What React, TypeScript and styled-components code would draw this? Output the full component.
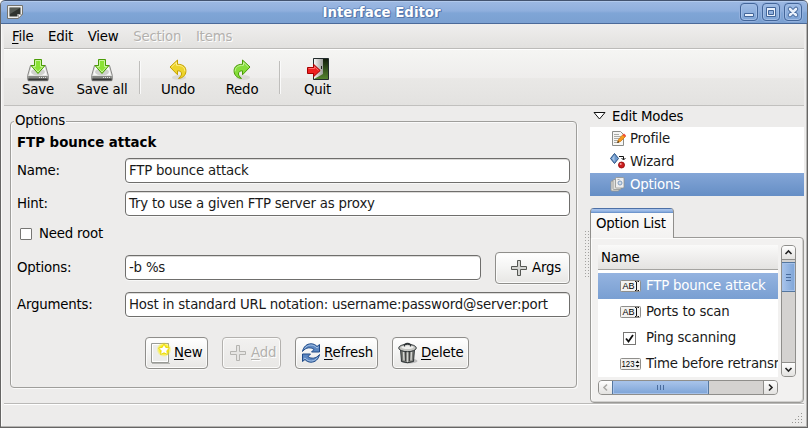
import React from "react";
import styled, { createGlobalStyle, css } from "styled-components";

const Global = createGlobalStyle`
  * { box-sizing: border-box; }
  html, body { margin: 0; padding: 0; background: #fff; }
  body { font: 13.33px/16px "DejaVu Sans", sans-serif; letter-spacing: -0.2px; color: #000; overflow: hidden; }
  svg { display: block; flex: none; letter-spacing: 0; }
`;

/* ---------- window frame ---------- */
const Window = styled.div`
  width: 808px;
  height: 428px;
  display: flex;
  flex-direction: column;
  background: #edeceb;
  border: 1px solid #666564;
  border-top: 0;
  border-radius: 5px 5px 0 0;
  box-shadow: inset -1px -1px 0 #b5b4b2, inset 1px 0 0 #fafaf9;
  overflow: hidden;
`;
const TitleBar = styled.div`
  height: 24px;
  flex: none;
  margin: 0 -1px;
  display: flex;
  align-items: center;
  padding: 0 5px 0 6px;
  border: 1px solid #4b6a99;
  border-top-color: #43536f;
  border-radius: 5px 5px 0 0;
  background: linear-gradient(#9db9e3, #8fafdd 45%, #7fa5d6 55%, #7ba0d1);
  box-shadow: inset 0 1px 0 #b1c9ec;
`;
const Title = styled.div`
  flex: 1;
  padding-top: 2px;
  text-align: center;
  font-weight: bold;
  line-height: 22px;
  letter-spacing: 0;
  color: #fff;
  text-shadow: 1px 1px 0 #5676a8, -1px 0 0 #5c80b6, 0 -1px 0 #6c90c6, 1px 0 0 #5c80b6;
`;
const WindowButtons = styled.div`
  display: flex;
  gap: 4px;
`;
const WindowButton = styled.div`
  width: 18px;
  height: 18px;
  border: 1px solid #426599;
  border-radius: 4px;
  background: linear-gradient(#9fbce5, #7da3d5);
  box-shadow: inset 0 0 0 1px #a2bee6, 0 0 0 1px #93b1de;
`;

const MenuBar = styled.div`
  height: 25px;
  flex: none;
  margin: 0 3px;
  display: flex;
  gap: 14.6px;
  padding: 5px 8px 0;
  background: linear-gradient(#efeeed, #e2e1df);
  border-bottom: 1px solid #bcbbb9;
`;
const MenuItem = styled.span<{ $off?: boolean }>`
  ${(p) => p.$off && css`color: #b3b1ae; text-shadow: 1px 1px 0 #fff;`}
`;
const Key = styled.span`
  text-decoration: underline;
  text-decoration-thickness: 1px;
  text-underline-offset: 2px;
  text-decoration-skip-ink: none;
`;

const ToolBar = styled.div`
  height: 57px;
  flex: none;
  margin: 0 3px;
  display: flex;
  align-items: flex-start;
  border-top: 1px solid #fff;
  border-bottom: 1px solid #c1c0be;
  background: linear-gradient(#f5f5f3, #eeedec 50%, #e9e8e6 52%, #e3e2e0);
`;
const Tool = styled.div<{ $w: number }>`
  width: ${(p) => p.$w}px;
  padding-top: 8px;
  display: flex;
  flex-direction: column;
  align-items: center;
  white-space: nowrap;
  line-height: 15px;
`;
const ToolRule = styled.div<{ $gap: number }>`
  width: 2px;
  height: 33px;
  margin: 11px 0 0 ${(p) => p.$gap}px;
  border-left: 1px solid #bfbebc;
  border-right: 1px solid #fafafa;
`;

/* ---------- body ---------- */
const Body = styled.div`
  height: 297px;
  flex: none;
  margin: 0 3px;
  display: flex;
`;
const Group = styled.fieldset`
  width: 567px;
  height: 267px;
  margin: 15px 0 0 6px;
  padding: 0 6px 0 6px;
  min-width: 0;
  border: 1px solid #9f9e9b;
  border-radius: 4px;
  box-shadow: inset 1px 1px 0 #fafafa, 1px 1px 0 #fafafa;
`;
const Legend = styled.div`
  width: fit-content;
  height: 16px;
  margin: -9px 0 0 -3px;
  padding: 0 1px;
  background: #edeceb;
`;
const Heading = styled.div`
  height: 16px;
  margin-top: 6px;
  font-weight: bold;
  letter-spacing: 0;
`;
const Field = styled.div<{ $top: number; $h?: number }>`
  display: flex;
  align-items: center;
  height: ${(p) => p.$h ?? 25}px;
  margin-top: ${(p) => p.$top}px;
`;
const ButtonField = styled(Field)`
  align-items: flex-start;
  gap: 14px;
`;
const EntryPair = styled.div`
  flex: 1;
  display: flex;
  align-items: center;
  padding-top: 3px;
`;
const Label = styled.label`
  width: 108px;
  flex: none;
`;
const Entry = styled.div`
  flex: 1;
  height: 25px;
  padding: 0 3px;
  line-height: 23px;
  white-space: nowrap;
  color: #1a1a1a;
  background: #fff;
  border: 1px solid #6f6e6c;
  border-radius: 4px;
  box-shadow: inset 0 1px 0 #dcdbd9, 0 1px 0 #f8f8f7;
`;
const CheckBox = styled.span`
  width: 12px;
  height: 12px;
  margin: 0 7px 0 3px;
  background: #fff;
  border: 1px solid #777674;
  border-radius: 1px;
`;
const Button = styled.div<{ $w: number; $off?: boolean; $pad?: number }>`
  width: ${(p) => p.$w}px;
  height: 32px;
  flex: none;
  display: flex;
  align-items: center;
  gap: 3px;
  padding: 0 0 1px ${(p) => p.$pad ?? 5}px;
  white-space: nowrap;
  border: 1px solid #8f8e8b;
  border-radius: 4px;
  background: linear-gradient(#ffffff, #f5f5f4 45%, #e7e6e4);
  box-shadow: inset 0 0 0 1px #fbfbfa, 0 1px 0 #f8f8f7;
  ${(p) => p.$off && css`
    color: #b3b1ae;
    text-shadow: 1px 1px 0 #fff;
    border-color: #b3b1ae;
    background: linear-gradient(#f2f1f0, #e8e7e5);
  `}
`;
const Actions = styled.div`
  display: flex;
  gap: 14px;
  margin: 20px 0 0 128px;
`;
const Grip = styled.div`
  width: 4px;
  height: 48px;
  margin: 125px 1px 0 8px;
  background: radial-gradient(circle at 0.5px 0.5px, #a3a2a0 0.6px, transparent 0.8px) 0 0 / 3px 3px;
`;
const Side = styled.div`
  width: 214px;
  height: 297px;
`;
const Expander = styled.div`
  height: 21px;
  display: flex;
  align-items: flex-start;
  padding: 3px 0 0 3px;
  gap: 6px;
  & > svg { margin-top: 3px; }
`;
const ModeRow = styled.div<{ $on?: boolean }>`
  height: 23px;
  display: flex;
  align-items: center;
  gap: 4px;
  padding: 0 0 0 20px;
  color: ${(p) => (p.$on ? "#fff" : "#1a1a1a")};
  background: ${(p) => (p.$on ? "linear-gradient(#84a6d7, #658ec5)" : "#fff")};
  & > svg { margin-top: -1px; }
`;
const Tab = styled.div`
  position: relative;
  width: 84px;
  height: 30px;
  margin: 12px 0 -1px;
  padding: 5px 0 0 5px;
  border: 1px solid #8f8e8b;
  border-top: 0;
  border-bottom: 0;
  border-radius: 4px 4px 0 0;
  background: linear-gradient(#4d70a6 0 1px, #a5c1ea 1px 2px, #83a8da 4px, #6f96cd 4px 5px, #fbfbfa 5px, #f3f2f1);
  line-height: 21px;
`;
const Notebook = styled.div`
  width: 214px;
  height: 166px;
  padding: 7px;
  border: 1px solid #9b9a97;
  border-radius: 0 4px 4px 4px;
  background: #f2f1f0;
  box-shadow: inset 1px 1px 0 #fcfcfb, inset -1px -1px 0 #d0cfcd;
  display: grid;
  grid-template: 132px 15px / 180px 15px;
  gap: 3px;
`;
const Tree = styled.div`
  overflow: hidden;
  background: #fff;
`;
const TreeHeader = styled.div`
  height: 25px;
  margin-bottom: 3px;
  padding-left: 3px;
  line-height: 26px;
  border-bottom: 1px solid #a5a4a1;
  background: linear-gradient(#fafaf9, #efeeed 50%, #e4e3e1);
`;
const TreeRow = styled.div<{ $on?: boolean }>`
  height: 26px;
  display: flex;
  align-items: center;
  padding: 0 0 0 22px;
  gap: 5px;
  white-space: nowrap;
  color: ${(p) => (p.$on ? "#fff" : "#1a1a1a")};
  background: ${(p) => (p.$on ? "linear-gradient(#94b3e0, #799fd2)" : "#fff")};
`;
const Scroll = styled.div<{ $col?: boolean }>`
  display: flex;
  flex-direction: ${(p) => (p.$col ? "column" : "row")};
  border: 1px solid #8f8e8b;
  border-radius: 4px;
  background: #d4d2d0;
  overflow: hidden;
`;
const Stepper = styled.div<{ $edge: "top" | "right" | "bottom" | "left" }>`
  flex: none;
  width: ${(p) => (p.$edge === "left" || p.$edge === "right" ? 14 : 13)}px;
  height: ${(p) => (p.$edge === "left" || p.$edge === "right" ? 13 : 14)}px;
  display: grid;
  place-items: center;
  background: linear-gradient(#fefefe, #e3e2e0);
  border-${(p) => p.$edge}: 1px solid #8f8e8b;
`;
const Thumb = styled.div<{ $col?: boolean }>`
  flex: none;
  width: ${(p) => (p.$col ? 15 : 97)}px;
  height: ${(p) => (p.$col ? 30 : 15)}px;
  margin: ${(p) => (p.$col ? "2px -1px 0" : "-1px 0 -1px -1px")};
  display: grid;
  place-items: center;
  border: 1px solid #55779f;
  background: linear-gradient(${(p) => (p.$col ? "90deg" : "180deg")}, #a9c4eb, #7da4d7);
  box-shadow: inset 0 0 0 1px #a5c1e9;
`;
const Trough = styled.div`
  flex: 1;
`;
const Status = styled.div`
  height: 24px;
  flex: none;
  margin: 0 3px;
  border-top: 1px solid #bab9b7;
  box-shadow: inset 0 1px 0 #fff;
  display: flex;
  justify-content: flex-end;
  padding: 8px 1px 0 0;
`;

/* ---------- icons ---------- */
const AppIcon = () => (
  <svg width="16" height="14" viewBox="0 0 16 14">
    <path d="M.5.5h15v9l-4 4H.5z" fill="#eeeeec" stroke="#73736f" />
    <path d="M2.500 2.500h11v6.500h-3v2.500h-8z" fill="#30342f" />
    <path d="M3 3h10L3 9z" fill="#565b55" />
    <path d="M11.500 13V9.500H15z" fill="#fff" stroke="#888" strokeWidth=".7" />
  </svg>
);
const SaveIcon = () => (
  <svg width="24" height="24" viewBox="0 0 24 24">
    <path d="M4.500 7.500h15l2.800 10v4.200q0 1-1 1H2.700q-1 0-1-1v-4.200z" fill="#e3e3e1" stroke="#858583" />
    <path d="M5.500 8.500h13l2.200 8.500H3.300z" fill="#f8f8f7" />
    <ellipse cx="12" cy="14" rx="7" ry="3.400" fill="#d0d1ce" />
    <path d="M2.200 18h19.600v3H2.200z" fill="#868884" />
    <path d="M2.200 20.500h19.600v2H2.200z" fill="#383838" />
    <path d="M13 19.500h1m1 0h1m1 0h1m1 0h1" stroke="#e4e4e4" />
    <path d="M8.500 1.500h7v6h3.500L12 15.500 5 7.500h3.500z" fill="#8ae234" stroke="#4a9b06" strokeLinejoin="round" />
    <path d="M9.500 2.500h5v6h2.400L12 14 7.100 8.500h2.400z" fill="none" stroke="#c9f59d" />
  </svg>
);
const CurveIcon = ({ redo }: { redo?: boolean }) => (
  <svg width="24" height="24" viewBox="0 0 24 24">
    <ellipse cx="13" cy="19.500" rx="7" ry="2.500" fill="#dad9d6" />
    <g transform={redo ? "translate(24 0) scale(-1 1)" : undefined} strokeLinejoin="round">
      <path
        d="M4 9l7.500-7v4.300c6 0 8.700 3 8.400 7.200-.3 4-3.400 6.700-7.400 6.900 2.500-2 3.600-4 2.800-5.800-.6-1.300-1.700-1.800-3.800-1.800v4z"
        fill={redo ? "#86de3a" : "#edd42b"}
        stroke={redo ? "#4a9b06" : "#c4a000"}
      />
      <path d="M5.500 9l5-4.700v3c5 0 8.300 1.700 8.400 6" fill="none" stroke={redo ? "#c4f29a" : "#fff08a"} />
    </g>
  </svg>
);
const QuitIcon = () => (
  <svg width="24" height="24" viewBox="0 0 24 24">
    <defs>
      <linearGradient id="door" x2="0" y2="1">
        <stop offset="0" stopColor="#111b0b" />
        <stop offset="1" stopColor="#55862f" />
      </linearGradient>
      <linearGradient id="leaf">
        <stop offset="0" stopColor="#f7f7f6" />
        <stop offset="1" stopColor="#9c9d9a" />
      </linearGradient>
    </defs>
    <path d="M7.500.5h15v21h-15z" fill="url(#door)" stroke="#222b2c" />
    <path d="M8 1h9v15l-9 5z" fill="url(#leaf)" />
    <path d="M15.500 8v3" stroke="#222" />
    <path d="M1.500 9.500h6V6.200l6.700 6.300-6.700 6.300v-3.300h-6z" fill="#ef2020" stroke="#a40000" />
    <path d="M2.500 10.500h6V8.700l4 3.800" fill="none" stroke="#ff6969" />
  </svg>
);
const PlusIcon = ({ off }: { off?: boolean }) => (
  <svg width="18" height="16" viewBox="0 0 18 16">
    <path
      d="M6.500.5h3v6h6v3h-6v6h-3v-6h-6v-3h6z"
      fill={off ? "#e6e5e3" : "#d3d4d1"}
      stroke={off ? "#b5b4b1" : "#555753"}
    />
  </svg>
);
const NewIcon = () => (
  <svg width="20" height="24" viewBox="0 0 20 24">
    <defs>
      <radialGradient id="glow">
        <stop offset=".5" stopColor="#fff000" />
        <stop offset="1" stopColor="#fff000" stopOpacity="0" />
      </radialGradient>
    </defs>
    <path d="M1 22.500h18" stroke="#b5b5b2" />
    <path d="M.5 2.500h17v19H.5z" fill="#ecedeb" stroke="#999b96" />
    <path d="M1.500 3.500h15v17h-15z" fill="none" stroke="#fff" />
    <circle cx="13" cy="8.500" r="7.500" fill="url(#glow)" />
    <path d="M13 3l1.700 3.400 3.800.6-2.700 2.700.6 3.800-3.400-1.700-3.400 1.700.6-3.800L7.500 7l3.800-.6z" fill="#fff" stroke="#e2cf00" strokeWidth=".8" />
  </svg>
);
const RefreshIcon = () => (
  <svg width="20" height="20" viewBox="0 0 20 20">
    <g fill="#5b87c2" stroke="#204a87" strokeLinejoin="round">
      <path d="M1.500 8.500C2.500 3.500 6 .8 10 .8c2.600 0 4.500 1 6 2.700l2.500-2v7.500h-8L13 6.500C10 4 5 4 1.500 8.500z" />
      <path d="M18.500 11.500c-1 5-4.500 7.700-8.500 7.700-2.600 0-4.500-1-6-2.700l-2.500 2V11h8L7 13.500c3 2.500 8 2.500 11.500-2z" />
    </g>
    <path d="M3.500 5.500C6.500 1.500 12 .5 16 5l1.500-1M16.500 14.500c-3 4-8.500 5-12.500.5l-1.500 1" fill="none" stroke="#a7c3e6" />
  </svg>
);
const TrashIcon = () => (
  <svg width="20" height="22" viewBox="0 0 20 22">
    <ellipse cx="11" cy="19" rx="8.500" ry="2.500" fill="#bbb" />
    <path d="M2.500 7h14l-1 12.500q-6 2.500-12 0z" fill="#777974" stroke="#2e3436" />
    <path d="M5.500 9.500l.5 9M9.500 10v10M13.500 9.500l-.5 9" stroke="#d3d4d1" strokeWidth="1.400" />
    <path d="M7.500 10v9M11.500 10v9" stroke="#444" />
    <ellipse cx="9.500" cy="6" rx="8.800" ry="3.700" fill="#c4c5c1" stroke="#2e3436" />
    <ellipse cx="9.500" cy="5.200" rx="6" ry="1.800" fill="#eeeeec" />
    <path d="M6.500 4.500V2.500q3-2 6 0v2" fill="none" stroke="#2e3436" strokeWidth="1.300" />
  </svg>
);
const ProfileIcon = () => (
  <svg width="16" height="16" viewBox="0 0 16 16">
    <path d="M2.500 1.500h8l3 3v11h-11z" fill="#f6f6f5" stroke="#8b8d89" />
    <path d="M4 4.500h5M4 6.500h7M4 8.500h6M4 10.500h5M4 12.500h3" stroke="#aaaca8" />
    <path d="M7.500 12.500l1-3L13 4.500l2.500 2-5 5z" fill="#f59a1f" stroke="#ce7a10" strokeWidth=".8" />
    <path d="M12.500 5l1.500-1.500L16 5.500 15 7z" fill="#ef4a3a" />
    <path d="M7.200 13l.8-2 1.200 1.200z" fill="#111" />
  </svg>
);
const WizardIcon = () => (
  <svg width="16" height="16" viewBox="0 0 16 16">
    <path d="M4.500.5l4 5-4 5-4-5z" fill="#6c98cc" stroke="#285081" />
    <path d="M4.500 2v7L2 5.500z" fill="#a6c3e4" />
    <path d="M9 3.500h4.500v3M11.500 5l2 2 2-2" fill="none" stroke="#111" />
    <circle cx="11.500" cy="12" r="3" fill="#cc2020" stroke="#8d0000" strokeWidth=".8" />
    <circle cx="10.700" cy="11" r="1" fill="#f3a0a0" />
  </svg>
);
const OptionsIcon = () => (
  <svg width="16" height="16" viewBox="0 0 16 16">
    <g fill="#e0e0dd" stroke="#92938e" strokeWidth=".8">
      <rect x="1" y="5" width="8" height="10" rx="1" />
      <rect x="3" y="3.500" width="8" height="10" rx="1" />
      <rect x="5.500" y="1.500" width="8.500" height="10.500" rx="1" fill="#eee" />
    </g>
    <circle cx="10" cy="7" r="2" fill="#d4deea" stroke="#7e9bbd" />
    <path d="M7.500 3.500h2" stroke="#aaa" />
  </svg>
);
const TextTypeIcon = () => (
  <svg width="21" height="12" viewBox="0 0 21 12">
    <rect x=".5" y=".5" width="20" height="11" rx="1" fill="#f3f2f0" stroke="#8f8e8b" />
    <text x="2.500" y="9.400" fontFamily="Liberation Sans, sans-serif" fontSize="9.500" textLength="12" lengthAdjust="spacingAndGlyphs" fill="#000">AB</text>
    <path d="M15 1.500h1.500M17.500 1.500H19M15 10.500h1.500M17.500 10.500H19M16.500 2v8" fill="none" stroke="#111" />
  </svg>
);
const CheckTypeIcon = () => (
  <svg width="21" height="13" viewBox="0 0 21 13">
    <rect x="3.500" y=".5" width="12" height="12" fill="#fff" stroke="#777674" />
    <path d="M6 6.500l2.500 3L13 3" fill="none" stroke="#111" strokeWidth="1.800" />
  </svg>
);
const NumberTypeIcon = () => (
  <svg width="21" height="12" viewBox="0 0 21 12">
    <rect x=".5" y=".5" width="20" height="11" rx="1" fill="#f3f2f0" stroke="#8f8e8b" />
    <text x="1.500" y="9.400" fontFamily="Liberation Sans, sans-serif" fontSize="9" textLength="13" lengthAdjust="spacingAndGlyphs" fill="#000">123</text>
    <path d="M15.500 5h4l-2-2.500zM15.500 7h4l-2 2.500z" fill="#111" />
  </svg>
);
const Chevron = ({ turn, off }: { turn: number; off?: boolean }) => (
  <svg width="9" height="9" viewBox="0 0 9 9">
    <path d="M1.500 6l3-3 3 3" fill="none" stroke={off ? "#aaa9a6" : "#222"} strokeWidth="1.600" transform={`rotate(${turn} 4.500 4.500)`} />
  </svg>
);
const ThumbMarks = ({ col }: { col?: boolean }) => (
  <svg width="7" height="7" viewBox="0 0 7 7">
    <path d={col ? "M1 .5h5M1 3.500h5M1 6.500h5" : "M.5 1v5M3.500 1v5M6.500 1v5"} stroke="#4a6c9d" />
  </svg>
);
const ResizeGrip = () => (
  <svg width="12" height="12" viewBox="0 0 12 12">
    <path
      d="M10 1.500h1M7 4.500h1m2 0h1M4 7.500h1m2 0h1m2 0h1M1 10.500h1m2 0h1m2 0h1m2 0h1"
      stroke="#979693"
    />
  </svg>
);

export default function App() {
  return (
    <>
      <Global />
      <Window>
        <TitleBar>
          <AppIcon />
          <Title>Interface Editor</Title>
          <WindowButtons>
            <WindowButton>
              <svg width="16" height="16" viewBox="0 0 16 16"><path d="M3.500 9.500h9v3h-9z" fill="#eaf1fb" stroke="#426599" /></svg>
            </WindowButton>
            <WindowButton>
              <svg width="16" height="16" viewBox="0 0 16 16"><path d="M3.500 3.500h9v9h-9z" fill="#eaf1fb" stroke="#426599" /><path d="M5.500 6.500h5v4h-5z" fill="#8fafdd" stroke="#426599" /></svg>
            </WindowButton>
            <WindowButton>
              <svg width="16" height="16" viewBox="0 0 16 16"><path d="M5 5l6 6m0-6l-6 6" stroke="#426599" strokeWidth="4.500" strokeLinecap="round" /><path d="M5 5l6 6m0-6l-6 6" stroke="#eaf1fb" strokeWidth="2.600" strokeLinecap="round" /></svg>
            </WindowButton>
          </WindowButtons>
        </TitleBar>
        <MenuBar>
          <MenuItem><Key>F</Key>ile</MenuItem>
          <MenuItem>Edit</MenuItem>
          <MenuItem>View</MenuItem>
          <MenuItem $off>Section</MenuItem>
          <MenuItem $off>Items</MenuItem>
        </MenuBar>
        <ToolBar>
          <Tool $w={68}><SaveIcon />Save</Tool>
          <Tool $w={60}><SaveIcon />Save all</Tool>
          <ToolRule $gap={7} />
          <Tool $w={74}><CurveIcon />Undo</Tool>
          <Tool $w={54}><CurveIcon redo />Redo</Tool>
          <ToolRule $gap={10} />
          <Tool $w={73}><QuitIcon />Quit</Tool>
        </ToolBar>
        <Body>
          <Group>
            <Legend>Options</Legend>
            <Heading>FTP bounce attack</Heading>
            <Field $top={7}><Label>Name:</Label><Entry>FTP bounce attack</Entry></Field>
            <Field $top={8}><Label>Hint:</Label><Entry>Try to use a given FTP server as proxy</Entry></Field>
            <Field $top={10} $h={16}><CheckBox />Need root</Field>
            <ButtonField $top={10} $h={32}>
              <EntryPair>
                <Label>Options:</Label>
                <Entry>-b %s</Entry>
              </EntryPair>
              <Button $w={75} $pad={15}><PlusIcon />Args</Button>
            </ButtonField>
            <Field $top={8}><Label>Arguments:</Label><Entry>Host in standard URL notation: username:password@server:port</Entry></Field>
            <Actions>
              <Button $w={63}><NewIcon /><span><Key>N</Key>ew</span></Button>
              <Button $w={59} $off $pad={7}><PlusIcon off /><span><Key>A</Key>dd</span></Button>
              <Button $w={83}><RefreshIcon /><span><Key>R</Key>efresh</span></Button>
              <Button $w={77}><TrashIcon /><span><Key>D</Key>elete</span></Button>
            </Actions>
          </Group>
          <Grip />
          <Side>
            <Expander>
              <svg width="13" height="8" viewBox="0 0 13 8"><path d="M1 .5h11L6.500 7z" fill="#fff" stroke="#111" /></svg>
              Edit Modes
            </Expander>
            <ModeRow><ProfileIcon />Profile</ModeRow>
            <ModeRow><WizardIcon />Wizard</ModeRow>
            <ModeRow $on><OptionsIcon />Options</ModeRow>
            <Tab>Option List</Tab>
            <Notebook>
              <Tree>
                <TreeHeader>Name</TreeHeader>
                <TreeRow $on><TextTypeIcon />FTP bounce attack</TreeRow>
                <TreeRow><TextTypeIcon />Ports to scan</TreeRow>
                <TreeRow><CheckTypeIcon />Ping scanning</TreeRow>
                <TreeRow><NumberTypeIcon />Time before retransmitted</TreeRow>
              </Tree>
              <Scroll $col>
                <Stepper $edge="bottom"><Chevron turn={0} /></Stepper>
                <Thumb $col><ThumbMarks col /></Thumb>
                <Trough />
                <Stepper $edge="top"><Chevron turn={180} /></Stepper>
              </Scroll>
              <Scroll>
                <Stepper $edge="right"><Chevron turn={-90} off /></Stepper>
                <Thumb><ThumbMarks /></Thumb>
                <Trough />
                <Stepper $edge="left"><Chevron turn={90} /></Stepper>
              </Scroll>
            </Notebook>
          </Side>
        </Body>
        <Status><ResizeGrip /></Status>
      </Window>
    </>
  );
}
